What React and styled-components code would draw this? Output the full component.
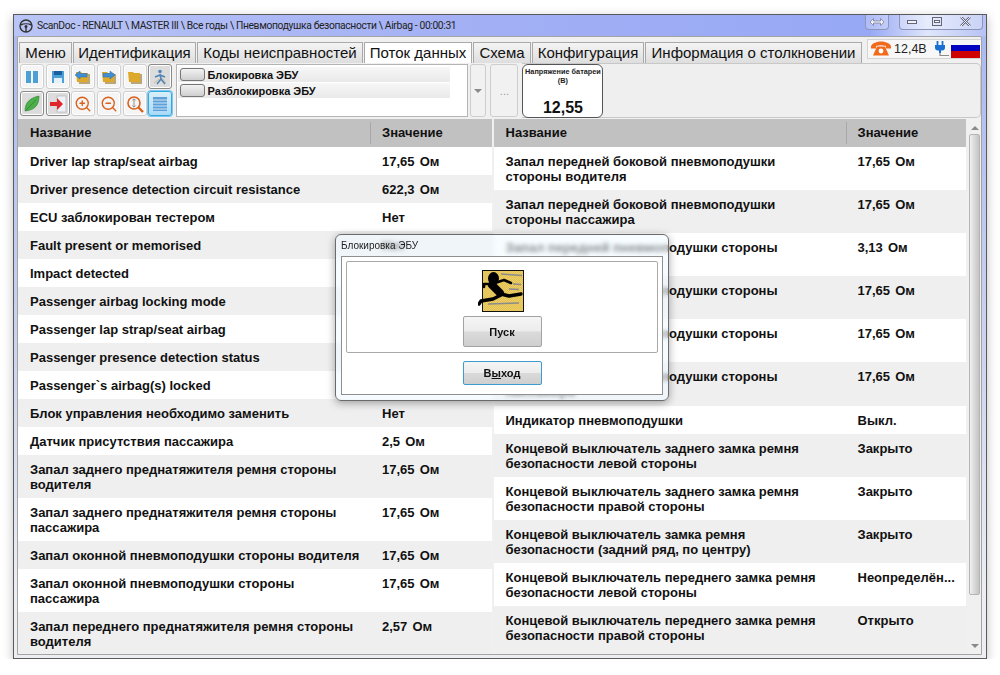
import React from 'react';
import styled, { createGlobalStyle } from 'styled-components';
import { ZoomIn, ZoomOut } from 'lucide-react';

const GlobalStyle = createGlobalStyle`
  html, body {
    margin: 0;
    background: #fff;
    font-family: "Liberation Sans", Arial, sans-serif;
  }
`;

const leftRows = [
  ['Driver lap strap/seat airbag', '17,65 Ом'],
  ['Driver presence detection circuit resistance', '622,3 Ом'],
  ['ECU заблокирован тестером', 'Нет'],
  ['Fault present or memorised', 'Нет'],
  ['Impact detected', 'Нет'],
  ['Passenger airbag locking mode', 'Нет'],
  ['Passenger lap strap/seat airbag', '17,65 Ом'],
  ['Passenger presence detection status', 'Нет'],
  ['Passenger`s airbag(s) locked', 'Нет'],
  ['Блок управления необходимо заменить', 'Нет'],
  ['Датчик присутствия пассажира', '2,5 Ом'],
  ['Запал заднего преднатяжителя ремня стороны\nводителя', '17,65 Ом'],
  ['Запал заднего преднатяжителя ремня стороны\nпассажира', '17,65 Ом'],
  ['Запал оконной пневмоподушки стороны водителя', '17,65 Ом'],
  ['Запал оконной пневмоподушки стороны\nпассажира', '17,65 Ом'],
  ['Запал переднего преднатяжителя ремня стороны\nводителя', '2,57 Ом'],
];

const rightRows = [
  ['Запал передней боковой пневмоподушки\nстороны водителя', '17,65 Ом'],
  ['Запал передней боковой пневмоподушки\nстороны пассажира', '17,65 Ом'],
  ['Запал передней пневмоподушки стороны\nводителя', '3,13 Ом'],
  ['Запал передней пневмоподушки стороны\nпассажира', '17,65 Ом'],
  ['Запал передней пневмоподушки стороны\nводителя', '17,65 Ом'],
  ['Запал передней пневмоподушки стороны\nпассажира', '17,65 Ом'],
  ['Индикатор пневмоподушки', 'Выкл.'],
  ['Концевой выключатель заднего замка ремня\nбезопасности левой стороны', 'Закрыто'],
  ['Концевой выключатель заднего замка ремня\nбезопасности правой стороны', 'Закрыто'],
  ['Концевой выключатель замка ремня\nбезопасности (задний ряд, по центру)', 'Закрыто'],
  ['Концевой выключатель переднего замка ремня\nбезопасности левой стороны', 'Неопределён...'],
  ['Концевой выключатель переднего замка ремня\nбезопасности правой стороны', 'Открыто'],
];

const tabs = [
  ['Меню', 53],
  ['Идентификация', 123],
  ['Коды неисправностей', 166],
  ['Поток данных', 108],
  ['Схема', 58],
  ['Конфигурация', 112],
  ['Информация о столкновении', 217],
];

const Window = styled.div`
  position: relative;
  box-sizing: border-box;
  width: 974px;
  height: 645px;
  margin: 14px 0 0 13px;
  border: 1px solid #5a5a5a;
  background: linear-gradient(#aab8f2 0, #cfd5f0 55%, #eceef2 90%);
  box-shadow: 0 3px 10px rgba(0, 0, 0, 0.25);
  display: flex;
  flex-direction: column;
`;

const TitleBar = styled.div`
  height: 21px;
  display: flex;
  align-items: center;
  gap: 4px;
  padding: 0 3px 0 5px;
  background: linear-gradient(90deg, #b9c5f6 0, #a3b0f4 45%, #97a8f5 88%, #dfe6fb 94%, #b6c2f4 100%);
  font-family: Roboto, "Liberation Sans", sans-serif;
  font-size: 10.300px;
  letter-spacing: -0.36px;
  color: #222;
`;

const TitleText = styled.span`
  flex: 1;
  white-space: nowrap;
`;

const CaptionGroup = styled.div`
  display: flex;
  height: 14px;
  margin-top: -7px;
  margin-left: ${(p) => p.$gap}px;
  border: 1px solid #8c95b8;
  border-top: none;
  border-radius: 0 0 4px 4px;
  background: rgba(255, 255, 255, 0.25);
`;

const CaptionButton = styled.div`
  width: ${(p) => p.$w}px;
  display: flex;
  align-items: center;
  justify-content: center;
`;

const Frame = styled.div`
  flex: 1;
  min-height: 0;
  margin: 0 4px 3px 3px;
  border: 1px solid #a4a4a4;
  border-radius: 2px 2px 0 0;
  background: #f0f0f0;
  display: flex;
  flex-direction: column;
  overflow: hidden;
`;

const TopRow = styled.div`
  display: flex;
  height: 21px;
  padding-top: 5px;
  justify-content: space-between;
`;

const TabList = styled.div`
  display: flex;
  gap: 1px;
  padding-left: 1px;
`;

const Tab = styled.div`
  box-sizing: border-box;
  width: ${(p) => p.$w}px;
  border: 1px solid #a9a9a9;
  border-bottom: none;
  background: ${(p) => (p.$active ? '#fff' : 'linear-gradient(#f4f4f4, #dedede)')};
  font-size: 15px;
  line-height: 20px;
  text-align: center;
  color: #111;
  white-space: nowrap;
`;

const Status = styled.div`
  box-sizing: border-box;
  width: 114px;
  height: 20px;
  margin-top: -3px;
  padding: 0 1px 0 3px;
  display: flex;
  align-items: center;
  background: #f7f7f7;
  border: 1px solid #d4d4d4;
  border-right: none;
  font-size: 12.500px;
  color: #222;
`;

const Voltage = styled.span`
  margin-left: 3px;
  flex: 1;
`;

const Flag = styled.div`
  width: 29px;
  height: 18px;
  margin-left: 1px;
  background: linear-gradient(#f5f5f5 0 5px, #0000c0 5px 11px, #d00000 11px);
`;

const Toolbar = styled.div`
  height: 55px;
  display: flex;
  align-items: flex-start;
  padding-left: 2px;
`;

const ToolGrid = styled.div`
  display: grid;
  grid-template-columns: repeat(6, 24px);
  grid-auto-rows: 25px;
  column-gap: 1.7px;
  row-gap: 2px;
  margin-top: 1px;
`;

const ToolButton = styled.div`
  box-sizing: border-box;
  display: flex;
  align-items: center;
  justify-content: center;
  border-radius: 3px;
  border: 1px solid ${(p) => (p.$mode === 'on' ? '#35a7e0' : p.$mode === 'down' ? '#8a8a8a' : '#cfcfcf')};
  background: ${(p) =>
    p.$mode === 'on' ? 'linear-gradient(#d9effc, #a9daf7)' : p.$mode === 'down' ? '#dcdcdc' : '#f5f5f5'};
  box-shadow: ${(p) => (p.$mode === 'on' ? '0 0 0 1px #7cc8ee' : 'inset 0 0 0 1px #fff')};
`;

const ListBox = styled.div`
  box-sizing: border-box;
  width: 292px;
  height: 53px;
  margin: 1px 0 0 4px;
  padding: 2px 0 0 1px;
  background: #fff;
  border: 1px solid #b4b4b4;
`;

const ListRow = styled.div`
  width: 272px;
  height: 15px;
  margin-bottom: 1px;
  display: flex;
  align-items: center;
  gap: 2px;
  background: linear-gradient(#f7f7f7, #e9e9e9);
  font-size: 11px;
  font-weight: bold;
  color: #111;
`;

const ListSwitch = styled.div`
  box-sizing: border-box;
  width: 25px;
  height: 13px;
  margin-left: 2px;
  border: 1px solid #777;
  border-radius: 3px;
  background: linear-gradient(#f2f2f2, #cfcfcf);
`;

const SideButton = styled.div`
  box-sizing: border-box;
  width: ${(p) => p.$w}px;
  height: 53px;
  margin: 1px 0 0 ${(p) => p.$gap}px;
  display: flex;
  align-items: center;
  justify-content: center;
  border: 1px solid #cdcdcd;
  border-radius: 3px;
  background: #f1f1f1;
  color: #9a9a9a;
  font-size: 11px;
`;

const Arrow = styled.div`
  flex: none;
  width: 0;
  height: 0;
  border-left: 4px solid transparent;
  border-right: 4px solid transparent;
  border-${(p) => (p.$up ? 'bottom' : 'top')}: 4px solid #8a8a8a;
`;

const TilePanel = styled.div`
  flex: 1;
  box-sizing: border-box;
  height: 55px;
  margin-left: 4px;
  border: 1px solid #c8c8c8;
  border-left: none;
  border-radius: 0 5px 5px 0;
  background: #efefef;
`;

const Tile = styled.div`
  box-sizing: border-box;
  width: 81px;
  height: 54px;
  border: 1px solid #555;
  border-radius: 6px;
  background: #fff;
  text-align: center;
  overflow: hidden;
`;

const TileLabel = styled.div`
  padding-top: 2px;
  font-size: 7.300px;
  line-height: 9px;
  font-weight: bold;
  color: #222;
  white-space: nowrap;
`;

const TileValue = styled.div`
  margin-top: 14px;
  font-size: 16px;
  line-height: 17px;
  font-weight: bold;
  color: #111;
`;

const Panes = styled.div`
  flex: 1;
  min-height: 0;
  display: flex;
  margin-top: 1px;
`;

const Pane = styled.div`
  width: ${(p) => p.$w}px;
  margin-right: ${(p) => p.$gap}px;
  overflow: hidden;
`;

const HeadRow = styled.div`
  display: grid;
  grid-template-columns: 353px 1fr;
  height: 28px;
  align-items: center;
  background: #c1c1c1;
  font-size: 13px;
  font-weight: bold;
  color: #111;
`;

const HeadCell = styled.div`
  height: 22px;
  line-height: 22px;
  padding-left: ${(p) => (p.$divider ? 12 : 11)}px;
  border-right: ${(p) => (p.$divider ? '1px solid #a8a8a8' : 'none')};
`;

const Row = styled.div`
  display: grid;
  grid-template-columns: 353px 1fr;
  padding: 7px 0 ${(p) => (p.$tall ? 6.1 : 6)}px;
  background: ${(p) => (p.$odd ? '#efefef' : '#fff')};
  font-size: 13px;
  line-height: 15px;
  font-weight: bold;
  color: #111;
`;

const Name = styled.div`
  padding-left: 12px;
  white-space: pre-line;
`;

const Value = styled.div`
  padding-left: 11px;
  word-spacing: 1.500px;
  white-space: nowrap;
`;

const Scrollbar = styled.div`
  width: 12px;
  display: flex;
  flex-direction: column;
  align-items: center;
  padding-top: 7px;
`;

const Thumb = styled.div`
  box-sizing: border-box;
  flex: none;
  width: 11px;
  height: 461px;
  margin: 4px 0 49px;
  border: 1px solid #b5b5b5;
  border-radius: 2px;
  background: linear-gradient(90deg, #f0f0f0, #d6d6d6 55%, #c4c4c4);
`;

const Dialog = styled.div`
  position: absolute;
  left: 321px;
  top: 219px;
  box-sizing: border-box;
  width: 334px;
  height: 167px;
  padding: 0 5px 5px;
  display: flex;
  flex-direction: column;
  border: 1px solid #6b6b6b;
  border-radius: 6px;
  background: rgba(238, 249, 255, 0.55);
  backdrop-filter: blur(2px);
  box-shadow: 0 2px 8px rgba(0, 0, 0, 0.35);
`;

const DialogTitle = styled.div`
  height: 21px;
  line-height: 21px;
  font-size: 10px;
  color: #222;
`;

const DialogBody = styled.div`
  flex: 1;
  box-sizing: border-box;
  padding: 4px 4px 0;
  display: flex;
  flex-direction: column;
  align-items: center;
  border: 1px solid #8f8f8f;
  background: #fff;
`;

const GroupBox = styled.div`
  box-sizing: border-box;
  align-self: stretch;
  height: 92px;
  padding-top: 8px;
  display: flex;
  flex-direction: column;
  align-items: center;
  gap: 4px;
  border: 1px solid #a9a9a9;
  border-radius: 2px;
`;

const DialogButton = styled.div`
  box-sizing: border-box;
  width: 79px;
  height: ${(p) => p.$h}px;
  margin-top: ${(p) => p.$top}px;
  display: flex;
  align-items: center;
  justify-content: center;
  border: 1px solid ${(p) => (p.$focus ? '#3c9ccf' : '#a3a3a3')};
  border-radius: 2px;
  background: linear-gradient(#f5f5f5 0, #ececec 48%, #dadada 52%, #cfcfcf 100%);
  font-size: 11px;
  font-weight: bold;
  color: #111;
`;

const Tool = ({ mode, children }) => <ToolButton $mode={mode}>{children}</ToolButton>;

const Folder = ({ dir }) => (
  <svg width="18" height="18" viewBox="0 0 18 18">
    <path d="M4 5h5l1 1h6v10H5z" fill="#b9a77a" />
    <path d="M2 4h5l1 1h6v9H3z" fill="#dca92d" />
    {dir === 'left' && <path d="M1 7l5-4v2.500h7v3.500H6v2z" fill="#3f8fd6" stroke="#2a6db0" strokeWidth=".5" />}
    {dir === 'right' && <path d="M15 7l-5-4v2.500H3v3.500h7v2z" fill="#3f8fd6" stroke="#2a6db0" strokeWidth=".5" />}
  </svg>
);

const Runner = () => (
  <svg width="46" height="42" viewBox="-4 0 46 42" style={{ marginLeft: -2 }}>
    <defs>
      <pattern id="hatch" width="1.400" height="1.400" patternUnits="userSpaceOnUse" patternTransform="rotate(45)">
        <rect width="1.400" height="1.400" fill="#efd26a" />
        <rect width=".6" height="1.400" fill="#dcb84a" />
      </pattern>
    </defs>
    <rect x="0.500" y="0.500" width="41" height="41" fill="url(#hatch)" stroke="#111" />
    <g stroke="#8b8b8b" strokeWidth="1.600" fill="none">
      <path d="M19 4l21 1.500M31 14l8 .5M27 19l10 .5M6 34l31-1" />
    </g>
    <g stroke="#000" fill="none" strokeLinecap="round" strokeLinejoin="round">
      <ellipse cx="11.500" cy="8.500" rx="5.500" ry="6.500" fill="#000" stroke="none" />
      <path d="M10 15l8 8" strokeWidth="8" />
      <path d="M13 13l9-3 7 3M7 14l-5 0 0 3" strokeWidth="2.600" />
      <path d="M19 24l8 2 12-2" strokeWidth="3.400" />
      <path d="M17 26l-6 3-12 2-2 3" strokeWidth="3.400" />
    </g>
  </svg>
);

const RunnerSmall = () => (
  <svg width="18" height="18" viewBox="0 0 18 18">
    <circle cx="9" cy="3.500" r="1.800" fill="#4f86b8" />
    <path d="M9 6l1 5-4 5M10 11l4 5M9 7L4 9M9 7l5 2" stroke="#4f86b8" strokeWidth="1.600" fill="none" />
    <path d="M3 15l5-4M15 15l-4-5" stroke="#c9b27a" strokeWidth=".8" />
  </svg>
);

const MagnifierV = () => (
  <svg width="18" height="18" viewBox="0 0 18 18" fill="none" stroke="#d9601c">
    <circle cx="8" cy="8" r="6" strokeWidth="1.600" />
    <path d="M12.500 12.500L17 17" strokeWidth="2.400" />
    <path d="M8 4v8M6.300 5.500L8 3.800l1.700 1.700M6.300 10.500L8 12.200l1.700-1.700" stroke="#777" strokeWidth=".8" />
  </svg>
);

const Logo = () => (
  <svg width="14" height="14" viewBox="0 0 14 14" fill="none" stroke="#333">
    <circle cx="7" cy="7" r="6" strokeWidth="1.400" />
    <path d="M1.500 6c3-1.500 8-1.500 11 0M7 8v5" strokeWidth="1.400" />
    <circle cx="7" cy="7.500" r="1.500" fill="#333" stroke="none" />
  </svg>
);

const Phone = () => (
  <svg width="20" height="16" viewBox="0 0 20 16" fill="#f26a1b">
    <path d="M0 5C3-1 17-1 20 5v2.500h-5V5c-3-1-7-1-10 0v2.500H0z" />
    <path d="M6 5.500h8l4 9H2z" />
    <circle cx="10" cy="10" r="2.400" fill="#fff" />
  </svg>
);

const Plug = () => (
  <svg width="16" height="16" viewBox="0 0 16 16">
    <path d="M6 10v4.500h9" fill="none" stroke="#8a8a8a" strokeWidth="1.200" />
    <path d="M1 4h10v2.500a3 3 0 0 1-3 3H4a3 3 0 0 1-3-3z" fill="#1b6fd0" />
    <path d="M3.500 0v4M8.500 0v4" stroke="#1b6fd0" strokeWidth="1.800" />
    <path d="M6 9v3" stroke="#1b6fd0" strokeWidth="2" />
  </svg>
);

const DataPane = ({ rows, w, gap }) => (
  <Pane $w={w} $gap={gap}>
    <HeadRow>
      <HeadCell $divider>Название</HeadCell>
      <HeadCell>Значение</HeadCell>
    </HeadRow>
    {rows.map(([name, value], i) => (
      <Row key={i} $odd={i % 2 === 1} $tall={name.includes('\n')}>
        <Name>{name}</Name>
        <Value>{value}</Value>
      </Row>
    ))}
  </Pane>
);

export default function App() {
  return (
    <>
      <GlobalStyle />
      <Window>
        <TitleBar>
          <Logo />
          <TitleText>ScanDoc - RENAULT \ MASTER III \ Все годы \ Пневмоподушка безопасности \ Airbag - 00:00:31</TitleText>
          <CaptionGroup $gap={0}>
            <CaptionButton $w={22}>
              <svg width="14" height="8" viewBox="0 0 14 8">
                <path d="M0 4l3.500-3.500V3h7V.5L14 4l-3.500 3.500V5h-7v2.500z" fill="#f0f3ff" stroke="#667" strokeWidth=".6" />
              </svg>
            </CaptionButton>
          </CaptionGroup>
          <CaptionGroup $gap={6}>
            <CaptionButton $w={24}>
              <svg width="10" height="4"><rect x=".5" y=".5" width="9" height="3" fill="#f0f3ff" stroke="#667" /></svg>
            </CaptionButton>
            <CaptionButton $w={25}>
              <svg width="10" height="9"><rect x=".5" y=".5" width="9" height="8" fill="none" stroke="#667" /><rect x="2.500" y="3.500" width="5" height="2" fill="#fff" stroke="#667" /></svg>
            </CaptionButton>
            <CaptionButton $w={33}>
              <svg width="11" height="9" viewBox="0 0 11 9"><path d="M1 0l9 9M10 0L1 9" stroke="#667" strokeWidth="2.400" /><path d="M1 0l9 9M10 0L1 9" stroke="#eef" strokeWidth="1" /></svg>
            </CaptionButton>
          </CaptionGroup>
        </TitleBar>
        <Frame>
          <TopRow>
            <TabList>
              {tabs.map(([label, w]) => (
                <Tab key={label} $w={w} $active={label === 'Поток данных'}>{label}</Tab>
              ))}
            </TabList>
            <Status>
              <Phone />
              <Voltage>12,4В</Voltage>
              <Plug />
              <Flag />
            </Status>
          </TopRow>
          <Toolbar>
            <ToolGrid>
              <Tool>
                <svg width="14" height="14"><rect x="1" y="1" width="5" height="12" fill="#4ca0d6" /><rect x="8" y="1" width="5" height="12" fill="#4ca0d6" /></svg>
              </Tool>
              <Tool>
                <svg width="14" height="14"><path d="M1 1h12v12H1z" fill="#4ca0d6" /><rect x="3" y="1" width="8" height="4" fill="#1c5f9e" /><rect x="3" y="8" width="8" height="5" fill="#e6f2fb" /></svg>
              </Tool>
              <Tool><Folder dir="left" /></Tool>
              <Tool><Folder dir="right" /></Tool>
              <Tool><Folder /></Tool>
              <Tool mode="down"><RunnerSmall /></Tool>
              <Tool mode="down">
                <svg width="18" height="18" viewBox="0 0 18 18"><path d="M2 16C2 7 7 3 16 1c0 9-4 14-14 15z" fill="#4caf4a" stroke="#2f7d30" strokeWidth=".6" /><path d="M3 15L13 5" stroke="#2f7d30" strokeWidth=".7" /></svg>
              </Tool>
              <Tool mode="down">
                <svg width="18" height="18" viewBox="0 0 18 18"><rect x="8" y="1" width="9" height="16" fill="#eef2f6" stroke="#aab" strokeWidth=".6" /><path d="M1 7h7V3l6 6-6 6v-4H1z" fill="#e0252b" /></svg>
              </Tool>
              <Tool><ZoomIn size={18} color="#d9601c" strokeWidth={1.8} /></Tool>
              <Tool><ZoomOut size={18} color="#d9601c" strokeWidth={1.8} /></Tool>
              <Tool><MagnifierV /></Tool>
              <Tool mode="on">
                <svg width="16" height="16"><path d="M1 1h14v14H1z" fill="#5f9fd8" /><path d="M1 4h14M1 7h14M1 10h14M1 13h14" stroke="#cfe8fa" /></svg>
              </Tool>
            </ToolGrid>
            <ListBox>
              <ListRow><ListSwitch />Блокировка ЭБУ</ListRow>
              <ListRow><ListSwitch />Разблокировка ЭБУ</ListRow>
            </ListBox>
            <SideButton $w={16} $gap={2}><Arrow /></SideButton>
            <SideButton $w={28} $gap={4}>...</SideButton>
            <TilePanel>
              <Tile>
                <TileLabel>Напряжение батареи<br />(В)</TileLabel>
                <TileValue>12,55</TileValue>
              </Tile>
            </TilePanel>
          </Toolbar>
          <Panes>
            <DataPane rows={leftRows} w={474} gap={2} />
            <DataPane rows={rightRows} w={473} gap={3} />
            <Scrollbar>
              <Arrow $up />
              <Thumb />
              <Arrow />
            </Scrollbar>
          </Panes>
        </Frame>
        <Dialog>
          <DialogTitle>Блокировка ЭБУ</DialogTitle>
          <DialogBody>
            <GroupBox>
              <Runner />
              <DialogButton $h={31} $top={0}>Пуск</DialogButton>
            </GroupBox>
            <DialogButton $h={24} $top={8} $focus>В<u>ы</u>ход</DialogButton>
          </DialogBody>
        </Dialog>
      </Window>
    </>
  );
}
